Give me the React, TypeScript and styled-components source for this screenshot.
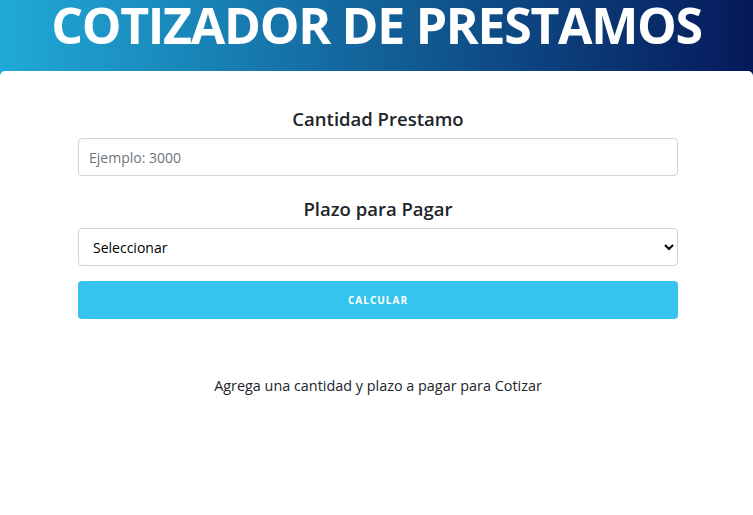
import React, { useState } from 'react';
import styled, { createGlobalStyle } from 'styled-components';

const GlobalStyle = createGlobalStyle`
  * { box-sizing: border-box; }
  body {
    margin: 0;
    font-family: "Open Sans", "Noto Sans", sans-serif;
    color: #212529;
    background: #fff;
  }
`;

const Page = styled.div`
  min-height: 515px;
  display: flex;
  flex-direction: column;
  background: linear-gradient(to right, #20aad8 0%, #05195a 100%);
`;

const Header = styled.header`
  height: 71px;
  display: flex;
  justify-content: center;
`;

const Title = styled.h1`
  margin: 0;
  padding-top: 1px;
  color: #fff;
  font-size: 50px;
  font-weight: 700;
  line-height: 48px;
  letter-spacing: -1.3px;
  white-space: nowrap;
`;

const Card = styled.main`
  flex: 1;
  background: #fff;
  border-radius: 5px 5px 0 0;
  display: flex;
  justify-content: center;
  padding: 30px 0 0 3px;
`;

const Form = styled.form`
  width: 600px;
  display: flex;
  flex-direction: column;
`;

const Label = styled.label`
  text-align: center;
  font-size: 18.5px;
  font-weight: 600;
  line-height: 28px;
  margin: 4px 0 5px;
`;

const Field = styled.div`
  display: flex;
  flex-direction: column;
  margin-bottom: 15px;
`;

const Input = styled.input`
  height: 38px;
  padding: 0 10px;
  font-family: inherit;
  font-size: 14px;
  border: 1px solid #ced4da;
  border-radius: 4px;
  color: #495057;
  &::placeholder { color: #6c757d; }
`;

const Select = styled.select`
  height: 38px;
  padding: 0 8px 0 10px;
  font-family: inherit;
  font-size: 14px;
  border: 1px solid #ced4da;
  border-radius: 4px;
  color: #000;
  background: #fff;
`;

const Button = styled.button`
  height: 38px;
  border: none;
  border-radius: 4px;
  background: #35c3ef;
  color: #fff;
  font-family: inherit;
  font-size: 10px;
  font-weight: 700;
  letter-spacing: 1px;
  text-transform: uppercase;
  cursor: pointer;
`;

const Message = styled.p`
  margin: 57px 0 0;
  text-align: center;
  font-size: 14.4px;
  line-height: 20px;
`;

export default function App() {
  const [cantidad, setCantidad] = useState('');
  const [plazo, setPlazo] = useState('');

  return (
    <Page>
      <GlobalStyle />
      <Header>
        <Title>COTIZADOR DE PRESTAMOS</Title>
      </Header>
      <Card>
        <Form onSubmit={e => e.preventDefault()}>
          <Field>
            <Label htmlFor="cantidad">Cantidad Prestamo</Label>
            <Input
              id="cantidad"
              type="number"
              placeholder="Ejemplo: 3000"
              value={cantidad}
              onChange={e => setCantidad(e.target.value)}
            />
          </Field>
          <Field>
            <Label htmlFor="plazo">Plazo para Pagar</Label>
            <Select id="plazo" value={plazo} onChange={e => setPlazo(e.target.value)}>
              <option value="">Seleccionar</option>
              <option value="3">3 meses</option>
              <option value="6">6 meses</option>
              <option value="12">12 meses</option>
              <option value="24">24 meses</option>
            </Select>
          </Field>
          <Button type="submit">Calcular</Button>
          <Message>Agrega una cantidad y plazo a pagar para Cotizar</Message>
        </Form>
      </Card>
    </Page>
  );
}
